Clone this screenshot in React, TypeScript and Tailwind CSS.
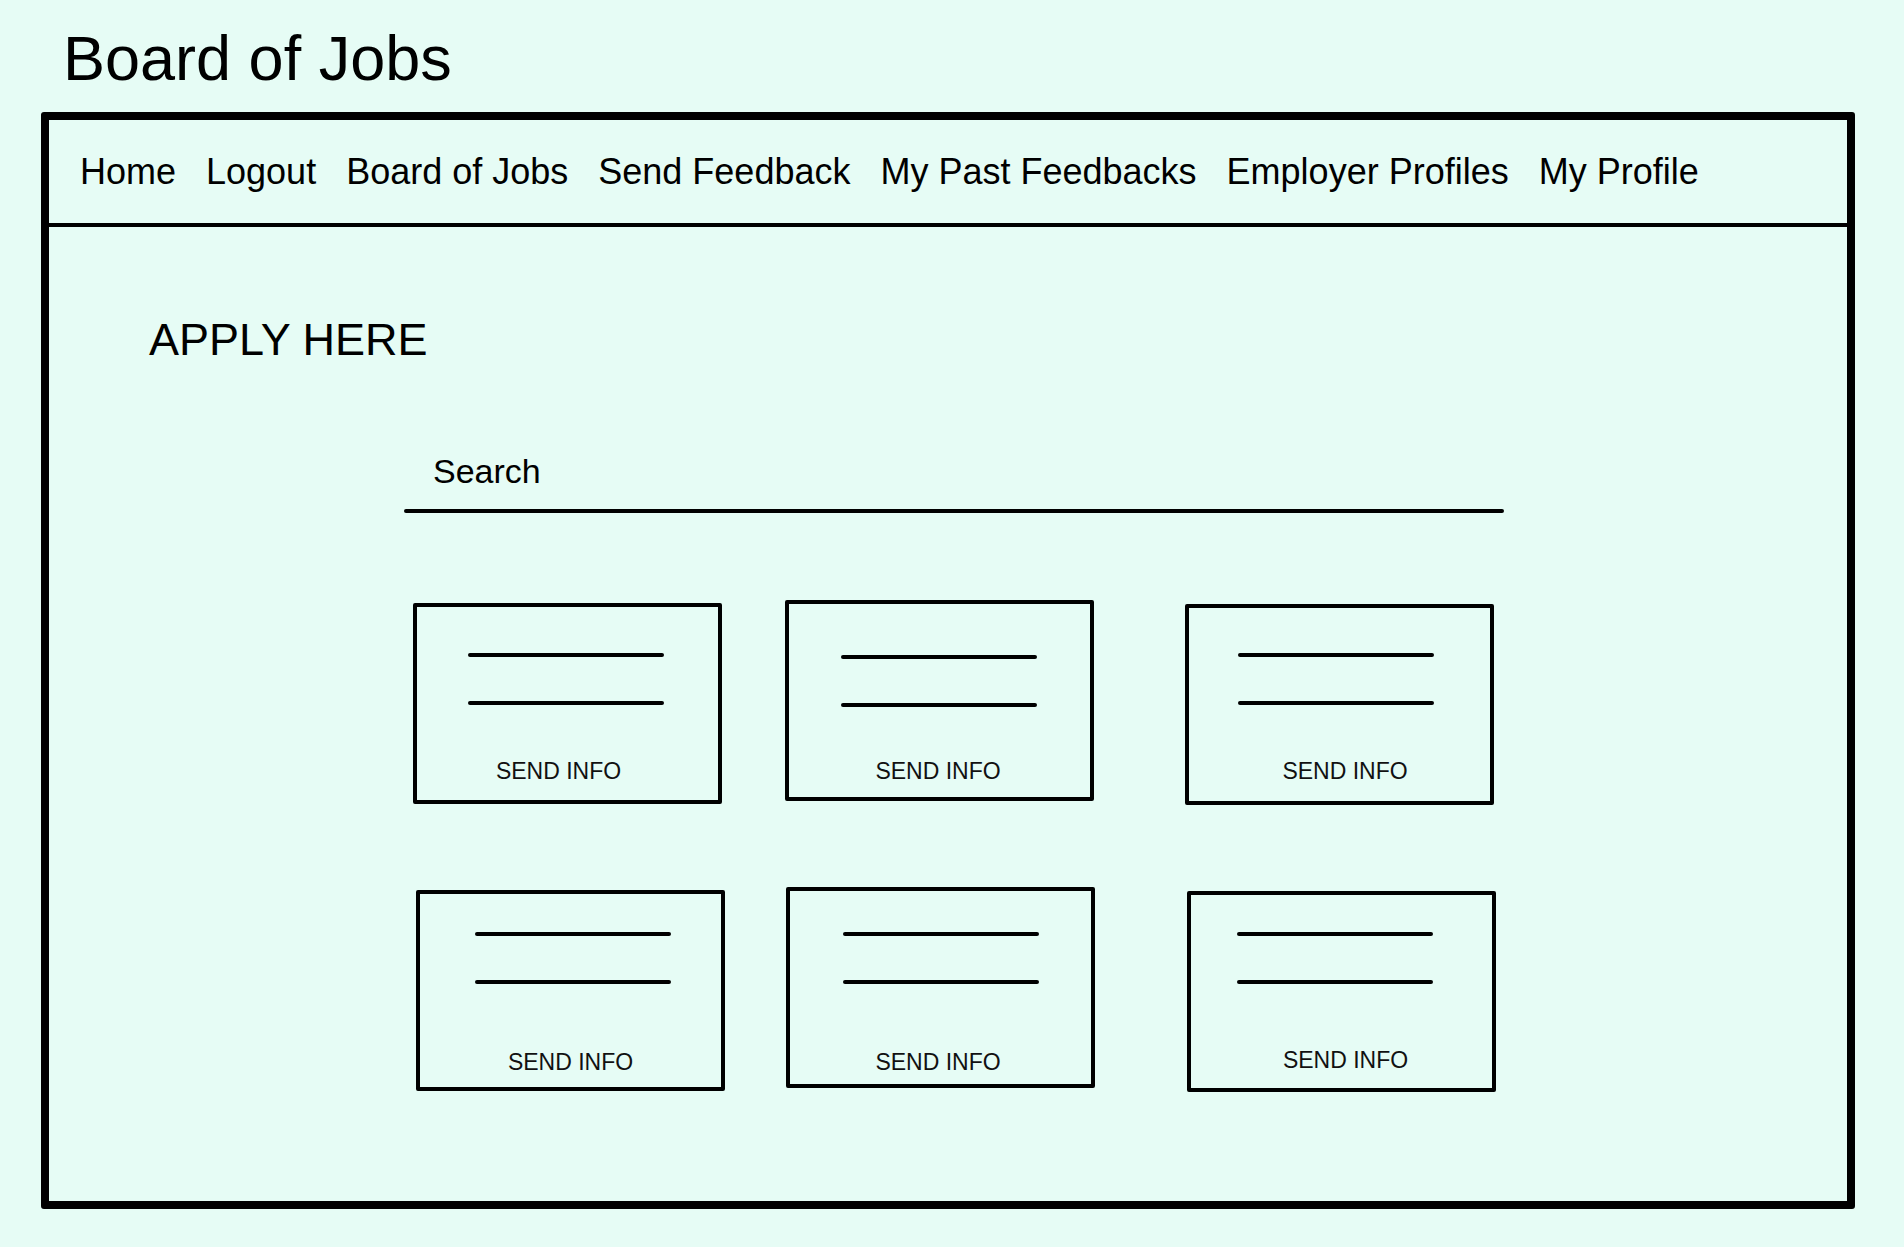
import React from 'react';

const navItems = ['Home', 'Logout', 'Board of Jobs', 'Send Feedback', 'My Past Feedbacks', 'Employer Profiles', 'My Profile'];

type JobCard = {
  id: number;
  box: string; // margin offsets of the card in its row
  lines: string; // padding for the two bars
  gap: string; // space between the bars and the label
  label: string; // nudge of the label
};

// the mockup is hand drawn, so every card sits a little differently
const rows: JobCard[][] = [
  [
    { id: 1, box: 'ml-0 mt-[3px]', lines: 'pt-[46px] pl-[51px]', gap: 'mt-[53px]', label: 'pr-[18px]' },
    { id: 2, box: 'ml-[63px] mt-0', lines: 'pt-[51px] pl-[52px]', gap: 'mt-[51px]', label: 'pr-[3px]' },
    { id: 3, box: 'ml-[91px] mt-[4px]', lines: 'pt-[45px] pl-[49px]', gap: 'mt-[53px]', label: 'pl-[11px]' },
  ],
  [
    { id: 4, box: 'ml-[3px] mt-[3px]', lines: 'pt-[38px] pl-[55px]', gap: 'mt-[65px]', label: 'pl-0' },
    { id: 5, box: 'ml-[61px] mt-0', lines: 'pt-[41px] pl-[53px]', gap: 'mt-[65px]', label: 'pr-[5px]' },
    { id: 6, box: 'ml-[92px] mt-[4px]', lines: 'pt-[37px] pl-[46px]', gap: 'mt-[63px]', label: 'pl-[8px]' },
  ],
];

const Card: React.FC<{ card: JobCard }> = ({ card }) => (
  <div className={`${card.box} w-[309px] h-[201px] shrink-0 border-4 border-black rounded-[2px] flex flex-col`}>
    <div className={`${card.lines} flex flex-col gap-[44px]`}>
      <div className="w-[196px] h-[4px] rounded-full bg-black" />
      <div className="w-[196px] h-[4px] rounded-full bg-black" />
    </div>
    <div className={`${card.gap} ${card.label} text-center text-[23px] leading-[26px] text-[#111]`}>SEND INFO</div>
  </div>
);

export default function App() {
  return (
    <div className="min-h-screen bg-[#e6fcf5] font-['Liberation_Sans',Arial,sans-serif] text-black pt-[22px] pb-[38px]">
      <h1 className="ml-[63px] text-[63px] leading-[72px]">Board of Jobs</h1>

      <div className="ml-[41px] mt-[18px] w-[1814px] h-[1097px] border-[8px] border-black rounded-[3px] flex flex-col">
        <nav className="h-[107px] shrink-0 pt-[32px] pl-[31px] flex gap-[30px] text-[36px] leading-[40px] border-b-4 border-black">
          {navItems.map((item) => (
            <a key={item} className="whitespace-nowrap">{item}</a>
          ))}
        </nav>

        <main className="pl-[100px] pt-[87px]">
          <h2 className="text-[45px] leading-[52px]">APPLY HERE</h2>

          {/* search field */}
          <div className="ml-[255px] mt-[85px] w-[1100px]">
            <div className="pl-[29px] text-[34px] leading-[40px]">Search</div>
            <div className="mt-[18px] h-[4px] rounded-full bg-black" />
          </div>

          <div className="ml-[264px] mt-[87px] flex flex-col gap-[82px]">
            {rows.map((row, i) => (
              <div key={i} className="flex items-start">
                {row.map((card) => (
                  <Card key={card.id} card={card} />
                ))}
              </div>
            ))}
          </div>
        </main>
      </div>
    </div>
  );
}
